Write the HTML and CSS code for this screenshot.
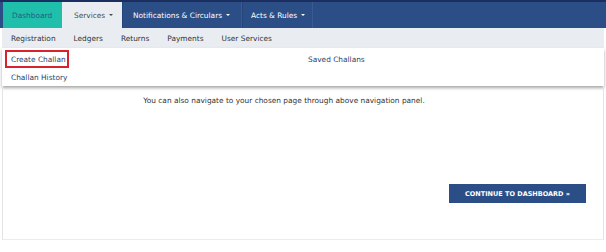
FILE: index.html
```html
<!DOCTYPE html>
<html>
<head>
<meta charset="utf-8">
<link rel="stylesheet" href="styles.css">
</head>
<body>
<div class="page">
  <div class="topline"></div>
  <nav class="nav">
    <a class="tab tab-dash">Dashboard</a>
    <a class="tab tab-active">Services <span class="caret"></span></a>
    <a class="tab tab-dark tab-notif">Notifications &amp; Circulars <span class="caret"></span></a>
    <a class="tab tab-dark tab-acts">Acts &amp; Rules <span class="caret"></span></a>
  </nav>
  <div class="subnav">
    <a class="sub">Registration</a>
    <a class="sub">Ledgers</a>
    <a class="sub">Returns</a>
    <a class="sub">Payments</a>
    <a class="sub">User Services</a>
  </div>
  <div class="dropdown">
    <div class="drop-row">
      <a class="drop-item boxed">Create Challan</a>
      <a class="drop-item saved">Saved Challans</a>
    </div>
    <div class="drop-row">
      <a class="drop-item">Challan History</a>
    </div>
  </div>
  <main class="content">
    <p class="hint">You can also navigate to your chosen page through above navigation panel.</p>
    <div class="actions">
      <button class="btn">CONTINUE TO DASHBOARD &raquo;</button>
    </div>
  </main>
</div>
</body>
</html>
```
FILE: styles.css
```css
* { box-sizing: border-box; }
html, body { margin: 0; padding: 0; background: #fff; }
body { font-family: "DejaVu Sans", Verdana, sans-serif; }
.page { width: 606px; height: 252px; }
.topline { height: 2px; background: #1a2f60; }
.nav {
  display: flex;
  height: 26px;
  background: #2c4e86;
  padding-left: 3px;
  font-size: 7.4px;
}
.tab {
  display: flex;
  align-items: center;
  height: 26px;
  color: #fff;
  white-space: nowrap;
}
.tab-dash { width: 59px; padding-left: 9px; background: #1fbfac; color: #215f80; }
.tab-active { width: 60px; padding-left: 12px; background: #e9edf1; color: #4a4a4a; }
.tab-dark { border-left: 1px solid #25447a; border-right: 1px solid #3a5b92; }
.tab-notif { width: 120px; padding-left: 10px; }
.tab-acts { width: 71px; padding-left: 8px; }
.caret {
  display: inline-block;
  width: 0; height: 0;
  margin-left: 4px;
  border-left: 2px solid transparent;
  border-right: 2px solid transparent;
  border-top: 2px solid currentColor;
}
.subnav {
  display: flex;
  height: 20px;
  align-items: center;
  background: #e9edf1;
  margin: 0 2px 0 2px;
  padding-left: 9px;
  font-size: 7.4px;
  color: #333;
}
.sub { margin-right: 18px; }
.dropdown {
  margin: 0 2px 0 2px;
  height: 38px;
  background: #fff;
  box-shadow: 0 2px 3px rgba(0,0,0,0.35);
  font-size: 7.4px;
  color: #2e3e66;
  padding-top: 2px;
}
.drop-row { display: flex; height: 18px; align-items: center; white-space: nowrap; }
.drop-item { padding-left: 9px; }
.boxed {
  margin-left: 3px;
  padding: 0 4px 0 4px;
  height: 18px;
  width: 64px;
  display: flex;
  align-items: center;
  border: 2px solid #d8232f;
}
.saved { margin-left: 230px; }
.content {
  margin: 0 2px;
  height: 154px;
  border-left: 1px solid #e4e4e4;
  border-right: 1px solid #e4e4e4;
  border-bottom: 1px solid #ececec;
  padding-top: 10px;
}
.hint {
  margin: 0;
  padding-right: 38px;
  text-align: center;
  font-size: 7.4px;
  color: #333;
}
.actions { display: flex; justify-content: flex-end; padding: 79px 17px 0 0; }
.btn {
  height: 19px;
  width: 137px;
  border: 0;
  background: #2c4e86;
  color: #fff;
  font-family: "DejaVu Sans", Verdana, sans-serif;
  font-weight: bold;
  font-size: 6.5px;
  padding: 0;
}
```
